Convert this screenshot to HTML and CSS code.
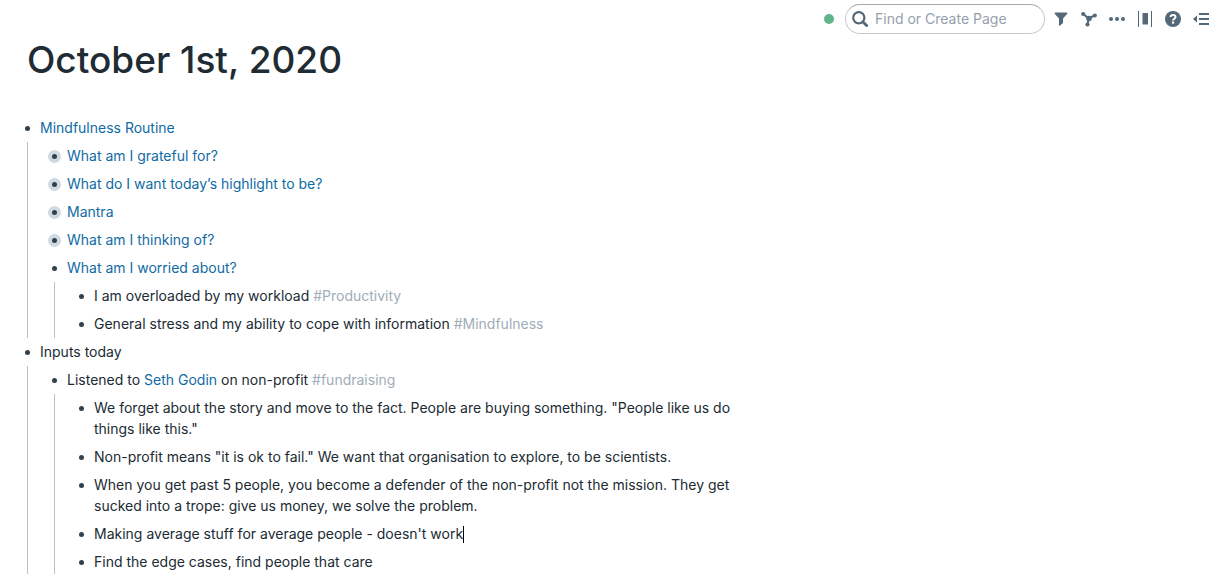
FILE: index.html
```html
<!DOCTYPE html>
<html lang="en">
<head>
  <meta charset="UTF-8" />
  <meta name="viewport" content="width=device-width, initial-scale=1.0"/>
  <title>October 1st, 2020</title>
  <link rel="stylesheet" href="styles.css">
</head>
<body>
  <header class="topbar">
    <span class="sync-dot"></span>
    <div class="search">
      <svg class="search-icon" viewBox="0 0 16 16" aria-hidden="true"><circle cx="6.8" cy="6.8" r="5.6" fill="none" stroke="currentColor" stroke-width="2.2"/><path d="M11 11l3.6 3.6" stroke="currentColor" stroke-width="2.8" stroke-linecap="round"/></svg>
      <input type="text" class="search-input" placeholder="Find or Create Page" aria-label="Find or Create Page" />
    </div>
    <nav class="tools">
      <button class="tool" aria-label="Filter">
        <svg viewBox="0 0 16 16"><path d="M2.500 1.500h11c.9 0 1.200 1 .6 1.600L10 7.500v4.600l-2.900 2.400c-.5.4-1.100.1-1.100-.5V7.500L1.900 3.100C1.300 2.500 1.600 1.500 2.500 1.500z" fill="currentColor"/></svg>
      </button>
      <button class="tool" aria-label="Graph">
        <svg viewBox="0 0 16 16"><path d="M2.200 3L7.500 7.300L13.800 4.500M7.800 7.300L6.500 13.500" fill="none" stroke="currentColor" stroke-width="2"/><g fill="currentColor"><circle cx="2.200" cy="3" r="2.100"/><circle cx="13.800" cy="4.500" r="2.100"/><circle cx="8" cy="7.500" r="2.800"/><circle cx="6.500" cy="13.500" r="2.100"/></g></svg>
      </button>
      <button class="tool" aria-label="More">
        <svg viewBox="0 0 16 16"><g fill="currentColor"><circle cx="2" cy="8" r="2"/><circle cx="8" cy="8" r="2"/><circle cx="14" cy="8" r="2"/></g></svg>
      </button>
      <button class="tool" aria-label="Page width">
        <svg viewBox="0 0 16 16"><path d="M1 0h1v16H1zM14 0h1v16h-1zM6 2h4.500a.5.5 0 0 1 .5.5v10.500a.5.5 0 0 1-.5.5H6a.5.5 0 0 1-.5-.5V2.500A.5.5 0 0 1 6 2z" fill="currentColor"/></svg>
      </button>
      <button class="tool" aria-label="Help">
        <svg viewBox="0 0 16 16"><circle cx="8" cy="8" r="8" fill="currentColor"/><path d="M5.600 6.100C5.600 4.500 6.700 3.900 8 3.900s2.500.7 2.500 2.100c0 1.700-2.400 1.700-2.400 3.500" fill="none" stroke="#fff" stroke-width="2"/><rect x="7" y="10.500" width="2.200" height="2.200" fill="#fff"/></svg>
      </button>
      <button class="tool" aria-label="Open sidebar">
        <svg viewBox="0 0 16 16"><path d="M4 4.500v7L0 8zM6 2h10v2H6zM6 7h10v2H6zM6 12h10v2H6z" fill="currentColor"/></svg>
      </button>
    </nav>
  </header>

  <main class="page">
    <h1>October 1st, 2020</h1>

    <ul class="outline">
      <li>
        <div class="block"><span class="bullet"></span><p><a href="#">Mindfulness Routine</a></p></div>
        <ul>
          <li><div class="block"><span class="bullet closed"></span><p><a href="#">What am I grateful for?</a></p></div></li>
          <li><div class="block"><span class="bullet closed"></span><p><a href="#">What do I want today’s highlight to be?</a></p></div></li>
          <li><div class="block"><span class="bullet closed"></span><p><a href="#">Mantra</a></p></div></li>
          <li><div class="block"><span class="bullet closed"></span><p><a href="#">What am I thinking of?</a></p></div></li>
          <li>
            <div class="block"><span class="bullet"></span><p><a href="#">What am I worried about?</a></p></div>
            <ul>
              <li><div class="block"><span class="bullet"></span><p>I am overloaded by my workload <a href="#" class="tag">#Productivity</a></p></div></li>
              <li><div class="block"><span class="bullet"></span><p>General stress and my ability to cope with information <a href="#" class="tag">#Mindfulness</a></p></div></li>
            </ul>
          </li>
        </ul>
      </li>
      <li>
        <div class="block"><span class="bullet"></span><p>Inputs today</p></div>
        <ul>
          <li>
            <div class="block"><span class="bullet"></span><p>Listened to <a href="#">Seth Godin</a> on non-profit <a href="#" class="tag">#fundraising</a></p></div>
            <ul>
              <li><div class="block"><span class="bullet"></span><p>We forget about the story and move to the fact. People are buying something. "People like us do things like this."</p></div></li>
              <li><div class="block"><span class="bullet"></span><p>Non-profit means "it is ok to fail." We want that organisation to explore, to be scientists.</p></div></li>
              <li><div class="block"><span class="bullet"></span><p>When you get past 5 people, you become a defender of the non-profit not the mission. They get sucked into a trope: give us money, we solve the problem.</p></div></li>
              <li><div class="block"><span class="bullet"></span><p class="editing" contenteditable="true" role="textbox" aria-label="Block text">Making average stuff for average people - doesn't work</p></div></li>
              <li><div class="block"><span class="bullet"></span><p>Find the edge cases, find people that care</p></div></li>
            </ul>
          </li>
        </ul>
      </li>
    </ul>
  </main>
</body>
</html>
```
FILE: styles.css
```css
html, body {
  margin: 0;
  padding: 0;
  background: white;
}
body {
  font-family: Inter, sans-serif;
  font-size: 14px;
  line-height: 21px;
  color: #202b33;
}
a {
  color: #106ba3;
  text-decoration: none;
}
a:hover {
  text-decoration: underline;
}

/* top bar */
.topbar {
  display: flex;
  justify-content: flex-end;
  align-items: center;
  height: 38px;
  padding-right: 7px;
  color: #5c7080;
}
.sync-dot {
  width: 10px;
  height: 10px;
  margin-right: 11px;
  border-radius: 50%;
  background: #62b48b;
}
.search {
  display: flex;
  align-items: center;
  width: 200px;
  height: 30px;
  margin-right: 8px;
  padding: 0 6px;
  box-sizing: border-box;
  border: 1px solid #c4c8ca;
  border-top-color: #a6aaad;
  border-radius: 15px;
}
.search-icon {
  flex: none;
  width: 16px;
  height: 16px;
  margin-right: 7px;
  color: #536878;
}
.search-input {
  flex: 1;
  min-width: 0;
  padding: 0 0 2px;
  border: none;
  outline: none;
  background: none;
  font: inherit;
  color: #202b33;
}
.search-input::placeholder {
  color: #93a1ad;
  opacity: 1;
}
.tools {
  display: flex;
  gap: 12px;
}
.tool {
  width: 16px;
  height: 16px;
  padding: 0;
  border: none;
  background: none;
  color: #536878;
  cursor: pointer;
}
.tool svg {
  display: block;
  width: 16px;
  height: 16px;
}

/* page */
.page {
  max-width: 724px;
  padding-left: 23px;
}
h1 {
  margin: 0 0 32px 4px;
  font-size: 37px;
  font-weight: 500;
  line-height: 44px;
}
ul {
  margin: 0;
  padding: 0;
  list-style: none;
}
.outline ul {
  margin-left: 4px;
  padding-left: 22px;
  border-left: 1px solid #b6c4cc;
}
.block {
  display: flex;
  gap: 6px;
  padding: 3px 0 4px;
}
.block p {
  margin: 0;
}
.bullet {
  position: relative;
  flex: none;
  width: 13px;
  height: 13px;
  margin: 5px 0 0 -2px;
  border-radius: 50%;
}
.bullet::after {
  content: "";
  position: absolute;
  top: 4px;
  left: 4px;
  width: 5px;
  height: 5px;
  border-radius: 50%;
  background: #30404d;
}
.bullet.closed {
  background: #ced9e0;
}
.tag {
  color: #a0adb8;
}
.editing {
  outline: none;
}
.editing::after {
  content: "";
  display: inline-block;
  height: 17px;
  margin-right: -1px;
  border-left: 1px solid #000;
  vertical-align: -4px;
}
```
